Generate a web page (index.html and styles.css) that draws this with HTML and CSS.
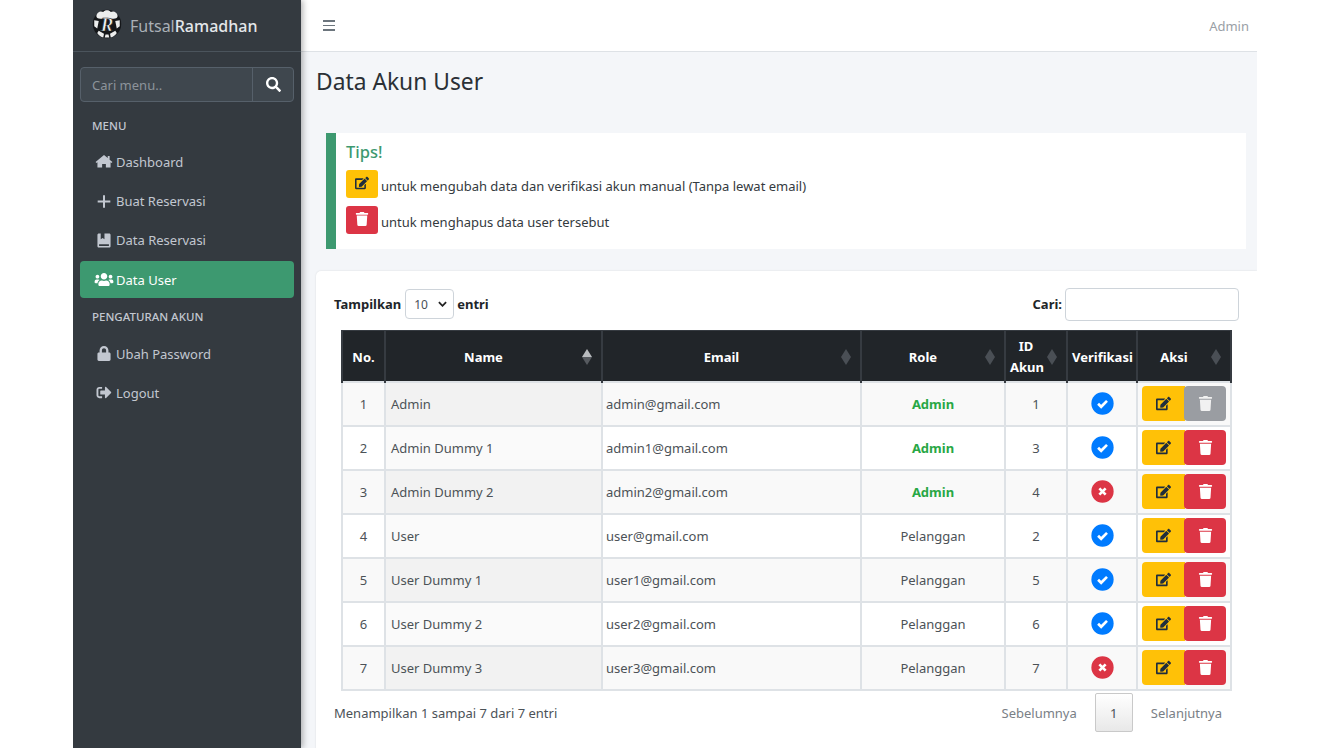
FILE: index.html
```html
<!DOCTYPE html>
<html lang="en">
<head>
    <meta charset="UTF-8">
    <meta name="viewport" content="width=device-width, initial-scale=1.0">
    <title>Data Akun User</title>
    <link rel="stylesheet" href="styles.css">
</head>
<body>
    <svg class="icon-defs" width="0" height="0">
        <symbol id="i-home" viewBox="0 0 576 512"><path d="M288 32L0 272l30 36 34-28v184h160V340h128v124h160V280l34 28 30-36-96-80V64h-64v74z"/></symbol>
        <symbol id="i-plus" viewBox="0 0 448 512"><path d="M190 40h68v182h182v68H258v182h-68V290H8v-68h182z"/></symbol>
        <symbol id="i-book" viewBox="0 0 448 512"><path d="M48 16h64v200l64-48 64 48V16h160c26 0 48 22 48 48v384c0 26-22 48-48 48H48c-26 0-48-22-48-48V64c0-26 22-48 48-48zM56 384v56h336v-56z"/></symbol>
        <symbol id="i-users" viewBox="0 0 640 512"><path d="M96 224c35.300 0 64-28.700 64-64s-28.700-64-64-64-64 28.700-64 64 28.700 64 64 64zm448 0c35.300 0 64-28.700 64-64s-28.700-64-64-64-64 28.700-64 64 28.700 64 64 64zm32 32h-64c-17.600 0-33.500 7.100-45.100 18.600 40.300 22.100 68.900 62 75.100 109.400h66c17.700 0 32-14.300 32-32v-32c0-35.300-28.700-64-64-64zm-256 0c61.900 0 112-50.100 112-112S381.900 32 320 32 208 82.100 208 144s50.100 112 112 112zm76.800 32h-8.300c-20.800 10-43.900 16-68.500 16s-47.600-6-68.500-16h-8.300C179.600 288 128 339.600 128 403.200V432c0 26.500 21.500 48 48 48h288c26.500 0 48-21.500 48-48v-28.800c0-63.600-51.600-115.200-115.200-115.200zm-223.700-13.400C161.500 263.100 145.600 256 128 256H64c-35.300 0-64 28.700-64 64v32c0 17.700 14.300 32 32 32h65.900c6.300-47.400 34.900-87.300 75.200-109.400z"/></symbol>
        <symbol id="i-lock" viewBox="0 0 448 512"><path d="M400 224h-24v-72C376 68.200 307.800 0 224 0S72 68.200 72 152v72H48c-26.500 0-48 21.500-48 48v192c0 26.500 21.500 48 48 48h352c26.500 0 48-21.500 48-48V272c0-26.500-21.500-48-48-48zm-104 0H152v-72c0-39.700 32.300-72 72-72s72 32.300 72 72v72z"/></symbol>
        <symbol id="i-logout" viewBox="0 0 512 512"><path d="M497 273L329 441c-15 15-41 4.500-41-17v-96H152c-13.300 0-24-10.700-24-24v-96c0-13.300 10.700-24 24-24h136V88c0-21.400 25.900-32 41-17l168 168c9.300 9.400 9.300 24.600 0 34zM192 436v-40c0-6.600-5.400-12-12-12H96c-17.700 0-32-14.300-32-32V160c0-17.700 14.300-32 32-32h84c6.600 0 12-5.400 12-12V76c0-6.600-5.400-12-12-12H96c-53 0-96 43-96 96v192c0 53 43 96 96 96h84c6.600 0 12-5.400 12-12z"/></symbol>
        <symbol id="i-search" viewBox="0 0 512 512"><path d="M505 442.700L405.300 343c-4.500-4.500-10.600-7-17-7H372c27.600-35.300 44-79.700 44-128C416 93.100 322.900 0 208 0S0 93.100 0 208s93.100 208 208 208c48.300 0 92.700-16.400 128-44v16.300c0 6.400 2.500 12.500 7 17l99.700 99.700c9.400 9.400 24.600 9.400 33.900 0l28.300-28.300c9.400-9.400 9.400-24.600.1-34zM208 336c-70.700 0-128-57.200-128-128 0-70.700 57.200-128 128-128 70.700 0 128 57.200 128 128 0 70.700-57.200 128-128 128z"/></symbol>
        <symbol id="i-edit" viewBox="0 0 576 512"><path d="M402.600 83.200l90.200 90.200c3.800 3.800 3.800 10 0 13.800L274.400 405.600l-92.800 10.300c-12.400 1.400-22.900-9.100-21.500-21.500l10.300-92.800L388.800 83.200c3.800-3.800 10-3.800 13.800 0zm162-22.900l-48.800-48.800c-15.200-15.200-39.900-15.200-55.200 0l-35.400 35.400c-3.800 3.800-3.800 10 0 13.800l90.200 90.200c3.800 3.800 10 3.800 13.800 0l35.400-35.400c15.200-15.300 15.200-40 0-55.200zM384 346.200V448H64V128h229.800c3.200 0 6.200-1.300 8.500-3.500l40-40c7.600-7.600 2.200-20.500-8.500-20.500H48C21.500 64 0 85.500 0 112v352c0 26.500 21.500 48 48 48h352c26.500 0 48-21.500 48-48V306.200c0-10.700-12.900-16-20.500-8.500l-40 40c-2.200 2.300-3.500 5.300-3.500 8.500z"/></symbol>
        <symbol id="i-trash" viewBox="0 0 448 512"><path d="M432 32H312l-9.400-18.700A24 24 0 0 0 281.100 0H166.800a23.700 23.700 0 0 0-21.400 13.300L136 32H16A16 16 0 0 0 0 48v32a16 16 0 0 0 16 16h416a16 16 0 0 0 16-16V48a16 16 0 0 0-16-16zM53.200 467a48 48 0 0 0 47.900 45h245.800a48 48 0 0 0 47.900-45L416 128H32z"/></symbol>
        <symbol id="i-check" viewBox="0 0 512 512"><circle cx="256" cy="256" r="248"/><path d="M158 262l68 66 130-130" fill="none" stroke="#fff" stroke-width="60"/></symbol>
        <symbol id="i-times" viewBox="0 0 512 512"><circle cx="256" cy="256" r="248"/><path d="M186 186l140 140M326 186L186 326" fill="none" stroke="#fff" stroke-width="60"/></symbol>
    </svg>

    <div class="wrapper">
        <aside class="sidebar">
            <div class="brand">
                <svg class="brand-logo" viewBox="0 0 40 40">
                    <circle cx="20" cy="20" r="19" fill="#15171a"/>
                    <path d="M11 13C6 13 4 9 8 5c2-2 5-2 7-1 2-3 8-3 10 0 2-1 5-1 7 1 4 4 2 8-3 8z" fill="#eceded"/>
                    <path d="M3 15l6 1-2 10-4-3zM37 15l-6 1 2 10 4-3zM9 29l7 4-1 5c-4-1-7-4-8-6zM31 29l-7 4 1 5c4-1 7-4 8-6zM18 34h4l1 4h-6z" fill="#eceded"/>
                    <text class="brand-letter" x="20" y="29" text-anchor="middle">R</text>
                </svg>
                <span class="brand-text">Futsal<b>Ramadhan</b></span>
            </div>
            <div class="side-search">
                <span class="side-search-text">Cari menu..</span>
                <span class="side-search-btn"><svg class="icon"><use href="#i-search"/></svg></span>
            </div>
            <div class="nav-header nav-header-first">MENU</div>
            <a class="nav-link"><svg class="icon"><use href="#i-home"/></svg>Dashboard</a>
            <a class="nav-link"><svg class="icon"><use href="#i-plus"/></svg>Buat Reservasi</a>
            <a class="nav-link"><svg class="icon"><use href="#i-book"/></svg>Data Reservasi</a>
            <a class="nav-link active"><svg class="icon"><use href="#i-users"/></svg>Data User</a>
            <div class="nav-header">PENGATURAN AKUN</div>
            <a class="nav-link"><svg class="icon"><use href="#i-lock"/></svg>Ubah Password</a>
            <a class="nav-link"><svg class="icon"><use href="#i-logout"/></svg>Logout</a>
        </aside>

        <div class="main">
            <header class="topbar">
                <span class="burger"><i></i><i></i><i></i></span>
                <span class="topbar-user">Admin</span>
            </header>

            <h1>Data Akun User</h1>

            <div class="tips">
                <h5>Tips!</h5>
                <p><span class="tip-btn btn-edit"><svg class="icon"><use href="#i-edit"/></svg></span> untuk mengubah data dan verifikasi akun manual (Tanpa lewat email)</p>
                <p><span class="tip-btn btn-del"><svg class="icon"><use href="#i-trash"/></svg></span> untuk menghapus data user tersebut</p>
            </div>

            <section class="card">
                <div class="tools">
                    <label class="tool-label">Tampilkan
                        <span class="fake-select">10<svg class="chev" viewBox="0 0 10 6"><path d="M1 1l4 4 4-4" fill="none" stroke="#222" stroke-width="2"/></svg></span>
                        entri</label>
                    <label class="tool-label">Cari:<span class="fake-input"></span></label>
                </div>

                <table>
                    <colgroup>
                        <col class="c-no"><col class="c-name"><col class="c-email"><col class="c-role"><col class="c-id"><col class="c-ver"><col class="c-act">
                    </colgroup>
                    <thead>
                        <tr>
                            <th>No.</th>
                            <th class="sort sort-on">Name</th>
                            <th class="sort">Email</th>
                            <th class="sort">Role</th>
                            <th class="sort">ID Akun</th>
                            <th>Verifikasi</th>
                            <th class="sort">Aksi</th>
                        </tr>
                    </thead>
                    <tbody id="rows"></tbody>
                </table>

                <div class="table-foot">
                    <span>Menampilkan 1 sampai 7 dari 7 entri</span>
                    <div class="pager">
                        <span class="page-link">Sebelumnya</span>
                        <span class="page-current">1</span>
                        <span class="page-link">Selanjutnya</span>
                    </div>
                </div>
            </section>
        </div>
    </div>

    <script>
        const users = [
            [1, 'Admin', 'admin@gmail.com', 'Admin', 1, true],
            [2, 'Admin Dummy 1', 'admin1@gmail.com', 'Admin', 3, true],
            [3, 'Admin Dummy 2', 'admin2@gmail.com', 'Admin', 4, false],
            [4, 'User', 'user@gmail.com', 'Pelanggan', 2, true],
            [5, 'User Dummy 1', 'user1@gmail.com', 'Pelanggan', 5, true],
            [6, 'User Dummy 2', 'user2@gmail.com', 'Pelanggan', 6, true],
            [7, 'User Dummy 3', 'user3@gmail.com', 'Pelanggan', 7, false]
        ];

        document.getElementById('rows').innerHTML = users.map(function (u) {
            const roleClass = u[3] === 'Admin' ? 'role-admin' : '';
            const verif = u[5]
                ? '<svg class="verif verif-yes"><use href="#i-check"/></svg>'
                : '<svg class="verif verif-no"><use href="#i-times"/></svg>';
            // akun pertama tidak bisa dihapus
            const delClass = u[0] === 1 ? 'btn-off' : 'btn-del';
            return '<tr>' +
                '<td class="center">' + u[0] + '</td>' +
                '<td class="cell-name">' + u[1] + '</td>' +
                '<td class="cell-email">' + u[2] + '</td>' +
                '<td class="center ' + roleClass + '">' + u[3] + '</td>' +
                '<td class="center">' + u[4] + '</td>' +
                '<td class="center">' + verif + '</td>' +
                '<td class="cell-act"><div class="act-group">' +
                '<span class="act-btn btn-edit"><svg class="icon"><use href="#i-edit"/></svg></span>' +
                '<span class="act-btn ' + delClass + '"><svg class="icon"><use href="#i-trash"/></svg></span>' +
                '</div></td>' +
                '</tr>';
        }).join('');
    </script>
</body>
</html>
```

FILE: styles.css
```css
* {
    box-sizing: border-box;
}

html, body {
    height: 100%;
}

body {
    margin: 0;
    background: #fff;
    color: #212529;
    font-family: "Noto Sans", "Open Sans", sans-serif;
    font-size: 13px;
    overflow: hidden;
}

.icon-defs {
    position: absolute;
}

.icon {
    fill: currentColor;
    display: block;
}

.wrapper {
    display: flex;
    width: 1184px;
    height: 748px;
    margin-left: 73px;
    overflow: hidden;
}

/* sidebar */
.sidebar {
    flex: 0 0 228px;
    background: #343a40;
    color: #c2c7d0;
    padding: 0 7px;
    box-shadow: 2px 0 6px rgba(0, 0, 0, 0.3);
    position: relative;
    z-index: 2;
}

.brand {
    display: flex;
    align-items: center;
    height: 52px;
    margin: 0 -7px;
    padding: 0 0 0 19px;
    border-bottom: 1px solid #4b545c;
    color: #aab0b7;
    font-size: 16px;
}

.brand b {
    color: #e4e7ea;
    font-weight: 500;
}

.brand-logo {
    width: 30px;
    height: 30px;
    margin: -4px 8px 0 0;
}

.brand-letter {
    font-family: "Liberation Serif", serif;
    font-size: 25px;
    font-style: italic;
    font-weight: bold;
    fill: #f2f2f2;
    stroke: #15171a;
    stroke-width: 0.800px;
}

.side-search {
    display: flex;
    height: 35px;
    margin: 15px 0 0;
    background: #3f474e;
    border: 1px solid #56606a;
    border-radius: 4px;
}

.side-search-text {
    flex: 1;
    padding: 0 11px;
    line-height: 35px;
    color: #8d949b;
}

.side-search-btn {
    display: flex;
    align-items: center;
    justify-content: center;
    width: 41px;
    border-left: 1px solid #56606a;
    color: #fff;
}

.side-search-btn .icon {
    width: 15px;
    height: 15px;
}

.nav-header {
    height: 34.500px;
    padding: 0 12px;
    font-size: 11.500px;
    font-weight: 500;
    line-height: 32px;
    color: #c2c7d0;
}

.nav-header-first {
    height: 33.500px;
    margin-top: 8px;
}

.nav-link {
    display: flex;
    align-items: center;
    height: 36.800px;
    margin-bottom: 2.500px;
    padding-left: 14px;
    border-radius: 4px;
    color: #c2c7d0;
}

.nav-link .icon {
    width: 20px;
    height: 15px;
    margin-right: 2px;
    color: #c2c7d0;
}

.nav-link.active {
    background: #3d9970;
    color: #fff;
}

.nav-link.active .icon {
    color: #fff;
}

/* konten */
.main {
    flex: 1;
    min-width: 0;
    background: #f4f6f9;
}

.topbar {
    display: flex;
    align-items: center;
    justify-content: space-between;
    height: 52px;
    padding: 0 8px 0 22px;
    background: #fff;
    border-bottom: 1px solid #dee2e6;
    color: #9aa0a6;
}

.burger {
    display: flex;
    flex-direction: column;
    gap: 3px;
    width: 12px;
}

.burger i {
    display: block;
    height: 1.500px;
    background: #6c757d;
}

h1 {
    margin: 0;
    padding: 12px 15px 0;
    height: 81px;
    font-size: 22.800px;
    font-weight: 400;
    line-height: 36px;
    color: #2b3036;
}

.tips {
    height: 116px;
    margin: 0 11px 0 25px;
    padding: 7px 10px 0 10px;
    background: #fff;
    border-left: 10px solid #3d9970;
}

.tips h5 {
    margin: 0 0 6px;
    font-size: 16.500px;
    font-weight: 500;
    line-height: 24px;
    color: #3d9970;
}

.tips p {
    display: flex;
    align-items: flex-end;
    gap: 3px;
    height: 28px;
    margin: 0 0 8px;
    color: #343a40;
    line-height: 24px;
}

.tip-btn {
    display: flex;
    align-items: center;
    justify-content: center;
    width: 32px;
    height: 28px;
    border-radius: 3px;
}

.tip-btn .icon {
    width: 14px;
    height: 14px;
    margin-top: -3px;
}

.btn-edit {
    background: #ffc107;
    color: #1f2d3d;
}

.btn-del {
    background: #dc3545;
    color: #fff;
}

.btn-off {
    background: #9a9da2;
    color: #f1f1f1;
}

.card {
    height: 500px;
    margin: 22px 0 0 15px;
    padding: 18px 18px 0;
    background: #fff;
    border-radius: 5px 0 0 0;
    box-shadow: 0 0 2px rgba(0, 0, 0, 0.12);
}

.tools {
    display: flex;
    align-items: flex-start;
    justify-content: space-between;
    height: 41px;
}

.tool-label {
    display: flex;
    align-items: center;
    gap: 3px;
    font-weight: 700;
    height: 30px;
}

.fake-select {
    display: flex;
    align-items: center;
    justify-content: space-between;
    width: 49px;
    height: 30px;
    margin-left: 1px;
    padding: 0 6px 0 8px;
    border: 1px solid #ced4da;
    border-radius: 4px;
    font-size: 12px;
    font-weight: 400;
    color: #495057;
}

.chev {
    width: 9px;
    height: 6px;
}

.fake-input {
    display: block;
    width: 174px;
    height: 33px;
    border: 1px solid #ced4da;
    border-radius: 4px;
}

table {
    width: 889px;
    margin-left: 7px;
    border-collapse: collapse;
    table-layout: fixed;
}

.c-no { width: 43px; }
.c-name { width: 217px; }
.c-email { width: 259px; }
.c-role { width: 144px; }
.c-id { width: 62px; }
.c-ver { width: 70px; }
.c-act { width: 94px; }

th {
    position: relative;
    height: 51px;
    padding: 3px 4px 0;
    background: #212529;
    color: #fff;
    border: 2px solid #363b41;
    border-top-width: 1px;
    border-bottom-width: 1px;
    font-size: 13px;
    font-weight: 700;
    line-height: 21px;
    text-align: center;
}

th.sort {
    padding-right: 24px;
}

th.sort::before {
    content: "";
    position: absolute;
    right: 9px;
    top: 18px;
    width: 10px;
    height: 16px;
    background: #4a4f55;
    clip-path: polygon(50% 0, 100% 50%, 50% 100%, 0 50%);
}

th.sort-on::before {
    background: linear-gradient(#b9bcbf 50%, #565a5f 50%);
}

td {
    height: 44px;
    padding: 0 4px;
    border: 2px solid #dee2e6;
    color: #4c5257;
}

tbody tr:nth-child(odd) {
    background: #f9f9f9;
}

.center {
    text-align: center;
}

.cell-name {
    padding-left: 5px;
    background: #f2f2f2;
}

.cell-email {
    padding-left: 3px;
}

tbody tr:nth-child(even) .cell-name {
    background: #fafafa;
}

.role-admin {
    color: #28a745;
    font-weight: 700;
}

.verif {
    display: block;
    width: 23px;
    height: 23px;
    margin: 0 auto;
}

.verif-yes {
    fill: #007bff;
}

.verif-no {
    fill: #dc3545;
}

.act-group {
    display: flex;
    justify-content: center;
}

.act-btn {
    display: flex;
    align-items: center;
    justify-content: center;
    width: 42px;
    height: 35px;
    border-radius: 4px;
}

.act-btn.btn-edit {
    width: 43px;
    border-radius: 4px 0 0 4px;
    margin-right: -1px;
}

.act-btn .icon {
    width: 15px;
    height: 15px;
}

.cell-act {
    padding: 0;
}

.table-foot {
    display: flex;
    align-items: center;
    justify-content: space-between;
    height: 44px;
    padding-right: 17px;
    color: #4c5257;
}

.pager {
    display: flex;
    align-items: center;
}

.page-link {
    color: #7a8086;
}

.page-current {
    width: 38px;
    height: 39px;
    margin: 0 18px;
    border: 1px solid #c9c9c9;
    border-radius: 2px;
    background: linear-gradient(#fff, #e8e8e8);
    line-height: 38px;
    text-align: center;
}
```
